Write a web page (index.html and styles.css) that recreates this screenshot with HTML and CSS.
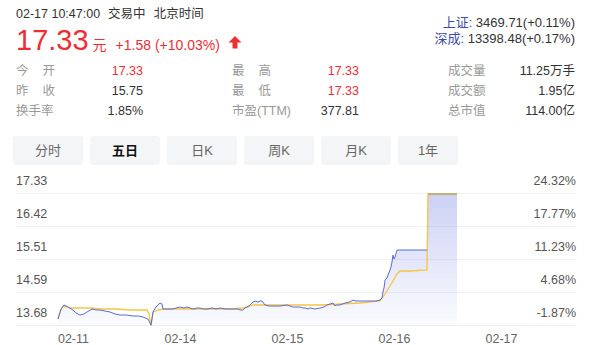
FILE: index.html
```html
<!DOCTYPE html>
<html lang="zh-CN">
<head>
    <meta charset="UTF-8">
    <title>行情</title>
    <link rel="stylesheet" href="styles.css">
</head>
<body>
    <div class="head">
        <div class="head-left">
            <div class="time">02-17 10:47:00<span class="gap"></span>交易中<span class="gap"></span>北京时间</div>
            <div class="price">
                <span class="now">17.33</span>
                <span class="unit">元</span>
                <span class="chg">+1.58 (+10.03%)</span>
                <svg class="arrow" width="14" height="14" viewBox="0 0 14 14">
                    <path d="M7 1 L13.5 7.5 L9.5 7.5 L9.5 13.5 L4.5 13.5 L4.5 7.5 L0.5 7.5 Z" fill="#ee2e34"/>
                </svg>
            </div>
        </div>
        <div class="head-right">
            <div><span class="idx">上证:</span> 3469.71(+0.11%)</div>
            <div><span class="idx">深成:</span> 13398.48(+0.17%)</div>
        </div>
    </div>

    <div class="stats">
        <div class="group">
            <div class="row"><span class="lbl just">今开</span><span class="val red">17.33</span></div>
            <div class="row"><span class="lbl just">昨收</span><span class="val">15.75</span></div>
            <div class="row"><span class="lbl">换手率</span><span class="val">1.85%</span></div>
        </div>
        <div class="group">
            <div class="row"><span class="lbl just">最高</span><span class="val red">17.33</span></div>
            <div class="row"><span class="lbl just">最低</span><span class="val red">17.33</span></div>
            <div class="row"><span class="lbl">市盈(TTM)</span><span class="val">377.81</span></div>
        </div>
        <div class="group">
            <div class="row"><span class="lbl">成交量</span><span class="val">11.25万手</span></div>
            <div class="row"><span class="lbl">成交额</span><span class="val">1.95亿</span></div>
            <div class="row"><span class="lbl">总市值</span><span class="val">114.00亿</span></div>
        </div>
    </div>

    <div class="tabs">
        <div class="tab">分时</div>
        <div class="tab active">五日</div>
        <div class="tab">日K</div>
        <div class="tab">周K</div>
        <div class="tab">月K</div>
        <div class="tab short">1年</div>
    </div>

    <div class="chart">
        <div class="grid-row first"><span>17.33</span><span>24.32%</span></div>
        <div class="grid-row"><span>16.42</span><span>17.77%</span></div>
        <div class="grid-row"><span>15.51</span><span>11.23%</span></div>
        <div class="grid-row"><span>14.59</span><span>4.68%</span></div>
        <div class="grid-row"><span>13.68</span><span>-1.87%</span></div>

        <svg class="lines" width="560" height="158" viewBox="16 168 560 158">
            <defs>
                <linearGradient id="fill" x1="0" y1="192" x2="0" y2="324" gradientUnits="userSpaceOnUse">
                    <stop offset="0" stop-color="#5466dc" stop-opacity="0.3"/>
                    <stop offset="1" stop-color="#5466dc" stop-opacity="0.02"/>
                </linearGradient>
            </defs>
            <polygon fill="url(#fill)" points="58,317 61,307 64,303 68,305 73,308 80,313 87,310 92,307 100,308 110,310 120,313 133,314 143,315 148,317 151,323 153,310 156,305 158,303 160,301 162,302 163,307 168,307 173,307 180,305 187,305 193,307 200,306 207,307 220,306 233,307 240,307 243,308 247,305 250,303 253,300 255,299 258,300 262,299 265,303 273,304 280,304 287,303 293,305 300,305 305,306 310,306 315,307 320,306 324,305 327,303 330,302 333,301 336,303 340,303 345,301 353,298 360,299 367,299 373,299 380,298 382,296 383,290 385,278 387,276 388,273 390,268 391,265 393,253 394,257 395,255 397,248 427,248 428,192 457,192 457,324 58,324"/>
            <polyline fill="none" stroke="#f4c542" stroke-width="1.3" points="58,317 60,310 63,304 67,305 70,306 80,306 90,306 100,307 115,307 130,308 147,308 149,312 151,324 152,317 153,310 156,309 158,308 165,307 173,307 190,307 210,307 230,307 243,306 248,305 253,303 258,303 263,303 280,303 300,303 323,303 340,302 360,301 380,299 383,295 390,284 397,272 400,269 410,269 427,268 428,192 457,192"/>
            <polyline fill="none" stroke="#5a6bdb" stroke-width="1" points="58,317 61,307 64,303 68,305 73,308 76,311 80,313 84,312 87,310 92,307 96,308 100,308 105,309 110,310 115,312 120,313 126,313 133,314 138,314 143,315 148,317 151,323 153,310 156,305 158,303 160,301 162,302 163,307 168,307 173,307 176,306 180,305 184,306 187,305 190,306 193,307 197,306 200,306 204,307 207,307 212,306 216,307 220,306 226,307 233,307 238,307 240,308 243,308 245,306 247,305 250,303 253,300 255,299 258,300 260,299 262,299 265,303 269,304 273,304 280,304 287,303 293,305 300,305 303,306 305,306 308,307 310,306 315,307 320,306 324,305 327,303 330,302 333,301 335,304 336,303 340,303 345,301 350,300 353,298 356,299 360,299 367,299 373,299 376,299 380,298 382,296 383,290 384,286 385,278 387,276 388,273 390,268 391,265 392,260 393,253 394,257 395,255 397,248 427,248"/>
            <polyline fill="none" stroke="#b7a57a" stroke-width="1.4" points="428,192 457,192"/>
        </svg>
    </div>

    <div class="axis">
        <span>02-11</span>
        <span>02-14</span>
        <span>02-15</span>
        <span>02-16</span>
        <span>02-17</span>
    </div>
</body>
</html>
```

FILE: styles.css
```css
body {
    margin: 0;
    background-color: #fff;
    font-family: "Liberation Sans", "Noto Sans CJK SC", sans-serif;
    color: #333;
    width: 596px;
    height: 345px;
    overflow: hidden;
}
.head {
    display: flex;
    justify-content: space-between;
    padding: 0 21px 0 16px;
}
.time {
    padding-top: 6px;
    font-size: 12.5px;
    line-height: 16px;
    color: #333;
}
.gap {
    display: inline-block;
    width: 8px;
}
.price {
    display: flex;
    align-items: baseline;
    margin-top: 2px;
    height: 34px;
    color: #ee2e34;
}
.now {
    font-size: 29px;
    line-height: 32px;
}
.unit {
    font-size: 14px;
    margin-left: 4px;
}
.chg {
    font-size: 14px;
    margin-left: 9px;
}
.arrow {
    margin-left: 8px;
    align-self: center;
    margin-top: 2px;
}
.head-right {
    padding-top: 15px;
    text-align: right;
    font-size: 13px;
    line-height: 16px;
}
.idx {
    color: #3d4aa6;
}
.stats {
    display: flex;
    justify-content: space-between;
    padding: 3px 21px 0 16px;
}
.group {
    width: 127px;
}
.row {
    display: flex;
    justify-content: space-between;
    height: 20px;
    line-height: 20px;
    font-size: 12.5px;
}
.lbl {
    color: #999;
}
.just {
    display: inline-block;
    width: 39px;
    text-align: justify;
    text-align-last: justify;
}
.val {
    color: #333;
}
.red {
    color: #ee2e34;
}
.tabs {
    display: flex;
    gap: 7px;
    padding-left: 13px;
    margin-top: 15px;
}
.tab {
    width: 70px;
    height: 29px;
    line-height: 29px;
    text-align: center;
    background-color: #f4f5f7;
    border-radius: 3px;
    font-size: 13px;
    color: #666;
}
.tab.short {
    width: 60px;
}
.tab.active {
    color: #111;
    font-weight: bold;
}
.chart {
    position: relative;
    margin: 5px 20px 0 16px;
}
.grid-row {
    display: flex;
    justify-content: space-between;
    align-items: flex-end;
    box-sizing: border-box;
    height: 33px;
    padding-bottom: 5px;
    border-bottom: 1px solid #f0f0f0;
    font-size: 12.5px;
    line-height: 14px;
    color: #555;
}
.grid-row.first {
    height: 24px;
}
.lines {
    position: absolute;
    left: 0;
    top: 0;
}
.axis {
    display: grid;
    grid-template-columns: repeat(5, 107px);
    padding-left: 20px;
    margin-top: 6px;
    font-size: 12.5px;
    line-height: 14px;
    color: #666;
    text-align: center;
}
```
